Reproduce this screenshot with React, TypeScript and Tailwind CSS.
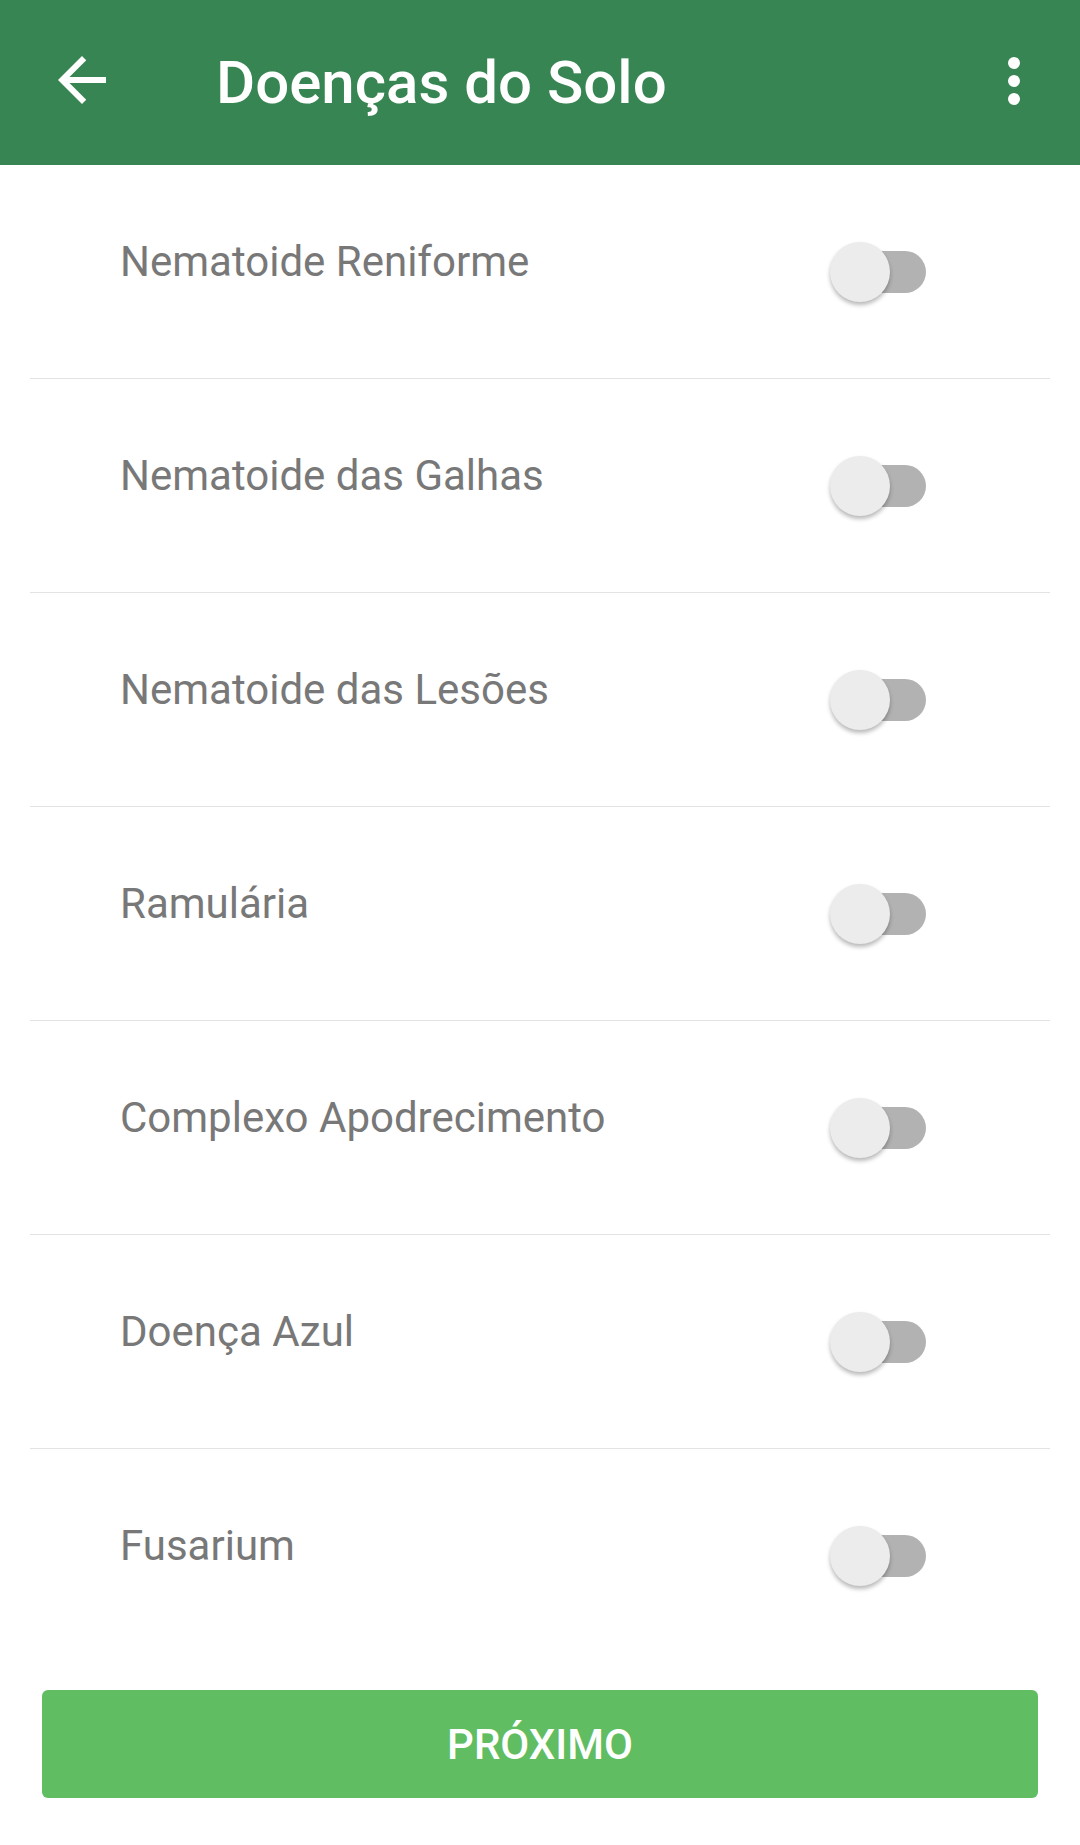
const diseases = [
  'Nematoide Reniforme',
  'Nematoide das Galhas',
  'Nematoide das Lesões',
  'Ramulária',
  'Complexo Apodrecimento',
  'Doença Azul',
  'Fusarium',
];

function Toggle() {
  return (
    <div className="relative w-[96px] h-[60px] shrink-0">
      <div className="absolute right-0 top-[9px] w-[84px] h-[42px] rounded-full bg-[#b2b2b2]" />
      <div className="absolute left-0 top-0 w-[60px] h-[60px] rounded-full bg-[#ececec] shadow-[0_3px_4px_rgba(0,0,0,0.28)]" />
    </div>
  );
}

export default function App() {
  return (
    <div className="min-h-[1845px] bg-white font-['Roboto',sans-serif]">
      <header className="h-[165px] bg-[#378552] flex items-center text-white">
        <button className="ml-[46px] w-[72px] h-[72px] mb-[6px] flex items-center justify-center">
          <svg viewBox="0 0 24 24" className="w-[72px] h-[72px]" fill="white">
            <path d="M20 11H7.83l5.59-5.59L12 4l-8 8 8 8 1.41-1.41L7.83 13H20v-2z" />
          </svg>
        </button>
        <h1 className="ml-[98px] text-[60px] font-medium leading-[70px]">Doenças do Solo</h1>
        <button className="ml-auto mr-[30px] w-[72px] h-[72px] mb-[3px] flex items-center justify-center">
          <svg viewBox="0 0 24 24" className="w-[72px] h-[72px]" fill="white">
            <circle cx="12" cy="6" r="2" />
            <circle cx="12" cy="12" r="2" />
            <circle cx="12" cy="18" r="2" />
          </svg>
        </button>
      </header>

      <ul className="px-[30px]">
        {diseases.map((name, i) => (
          <li
            key={name}
            className={
              i < diseases.length - 1
                ? 'h-[214px] flex items-center justify-between border-b border-[#e3e3e3] pr-[124px]'
                : 'h-[214px] flex items-center justify-between border-b border-transparent pr-[124px]'
            }
          >
            <span className="self-start pt-[72px] pl-[90px] text-[42px] leading-[50px] text-[#787878]">
              {name}
            </span>
            <Toggle />
          </li>
        ))}
      </ul>

      <div className="px-[42px] mt-[27px]">
        <button className="w-full h-[108px] rounded-[6px] bg-[#61bd61] text-white text-[42px] font-medium flex items-center justify-center">
          PRÓXIMO
        </button>
      </div>
    </div>
  );
}
